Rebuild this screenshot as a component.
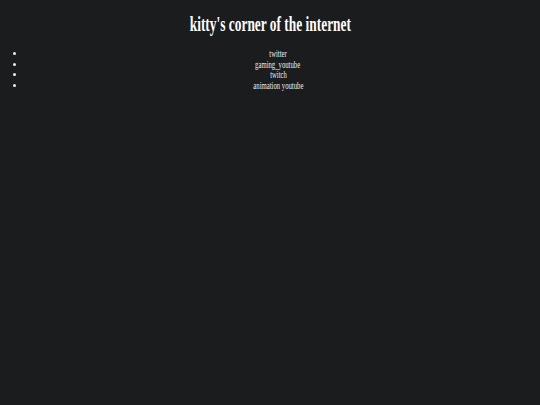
export default function App() {
  const links = ['twitter', 'gaming_youtube', 'twitch', 'animation youtube']

  return (
    <div className="min-h-screen bg-[#1b1c1e] text-[#ececec] font-['Liberation_Serif',serif] pt-[12px]">
      <h1 className="text-center text-[20px] leading-[24px] font-bold text-white">
        <span className="inline-block scale-x-[0.67]">kitty's corner of the internet</span>
      </h1>
      <ul className="list-disc pl-[26px] pr-[10px] mt-[13px] text-[10px] leading-[10.7px]">
        {links.map(l => (
          <li key={l} className="text-center">
            <span className="inline-block scale-x-[0.67]">{l}</span>
          </li>
        ))}
      </ul>
    </div>
  )
}
